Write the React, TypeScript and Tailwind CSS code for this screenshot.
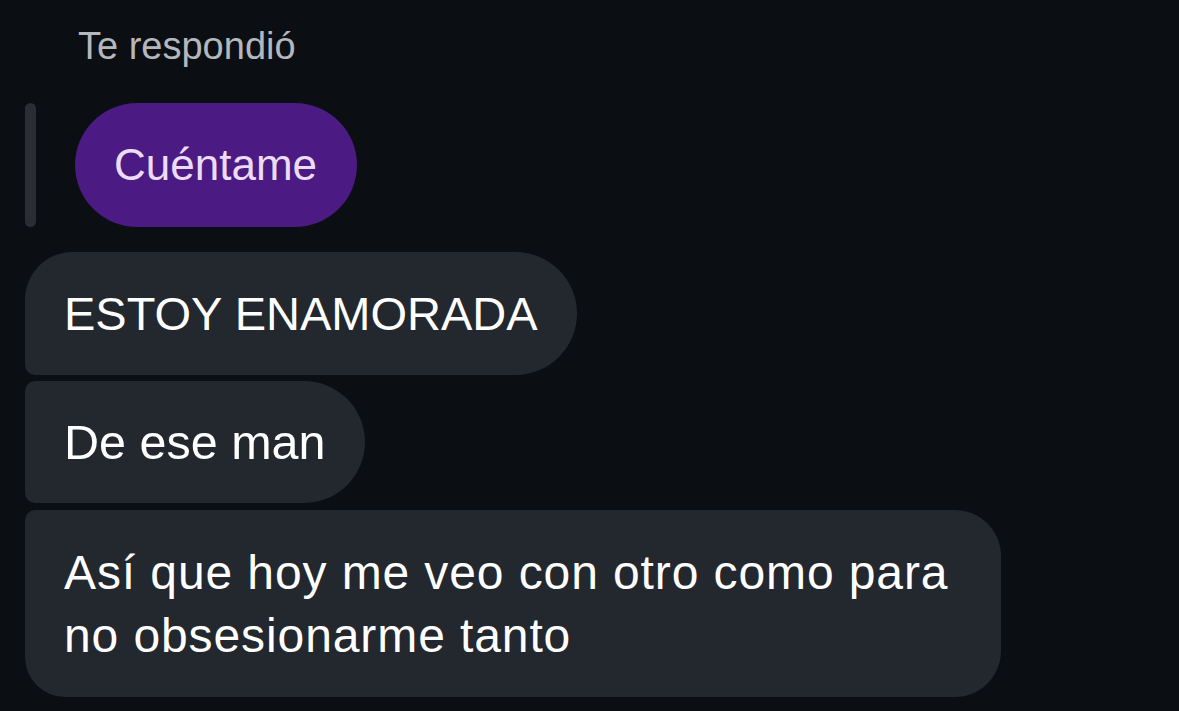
import React from "react";

export default function App() {
  return (
    <div
      className="w-[1179px] h-[711px] overflow-hidden bg-[#0b0e13] pl-[25px]"
      style={{ fontFamily: '"Liberation Sans", Arial, sans-serif' }}
    >
      <div className="pl-[53px] pt-[28px] text-[38px] leading-[37px] text-[#b4b7bc]">
        Te respondió
      </div>
      <div className="mt-[38px] flex h-[124px] items-stretch">
        <div className="w-[11px] rounded-full bg-[#2a2d33]" />
        <div className="ml-[39px] flex w-[282px] items-center rounded-full bg-[#4b1a82] pl-[39px] text-[44px] leading-none text-[#ecdcf8]">
          Cuéntame
        </div>
      </div>
      <div className="mt-[25px] flex flex-col items-start">
        <div className="flex h-[123px] w-[552px] items-center rounded-tl-[48px] rounded-tr-[62px] rounded-br-[62px] rounded-bl-[10px] bg-[#23272e] pl-[39px] text-[47px] leading-none text-white">
          ESTOY ENAMORADA
        </div>
        <div className="mt-[6px] flex h-[122px] w-[340px] items-center rounded-tl-[10px] rounded-tr-[61px] rounded-br-[61px] rounded-bl-[10px] bg-[#23272e] pl-[39px] text-[48.5px] leading-none text-white">
          De ese man
        </div>
        <div className="mt-[7px] flex h-[187px] w-[976px] flex-col justify-center rounded-tl-[10px] rounded-tr-[46px] rounded-br-[46px] rounded-bl-[40px] bg-[#23272e] pl-[39px] text-[48px] leading-[63px] tracking-[0.9px] text-white">
          <span>Así que hoy me veo con otro como para</span>
          <span>no obsesionarme tanto</span>
        </div>
      </div>
    </div>
  );
}
